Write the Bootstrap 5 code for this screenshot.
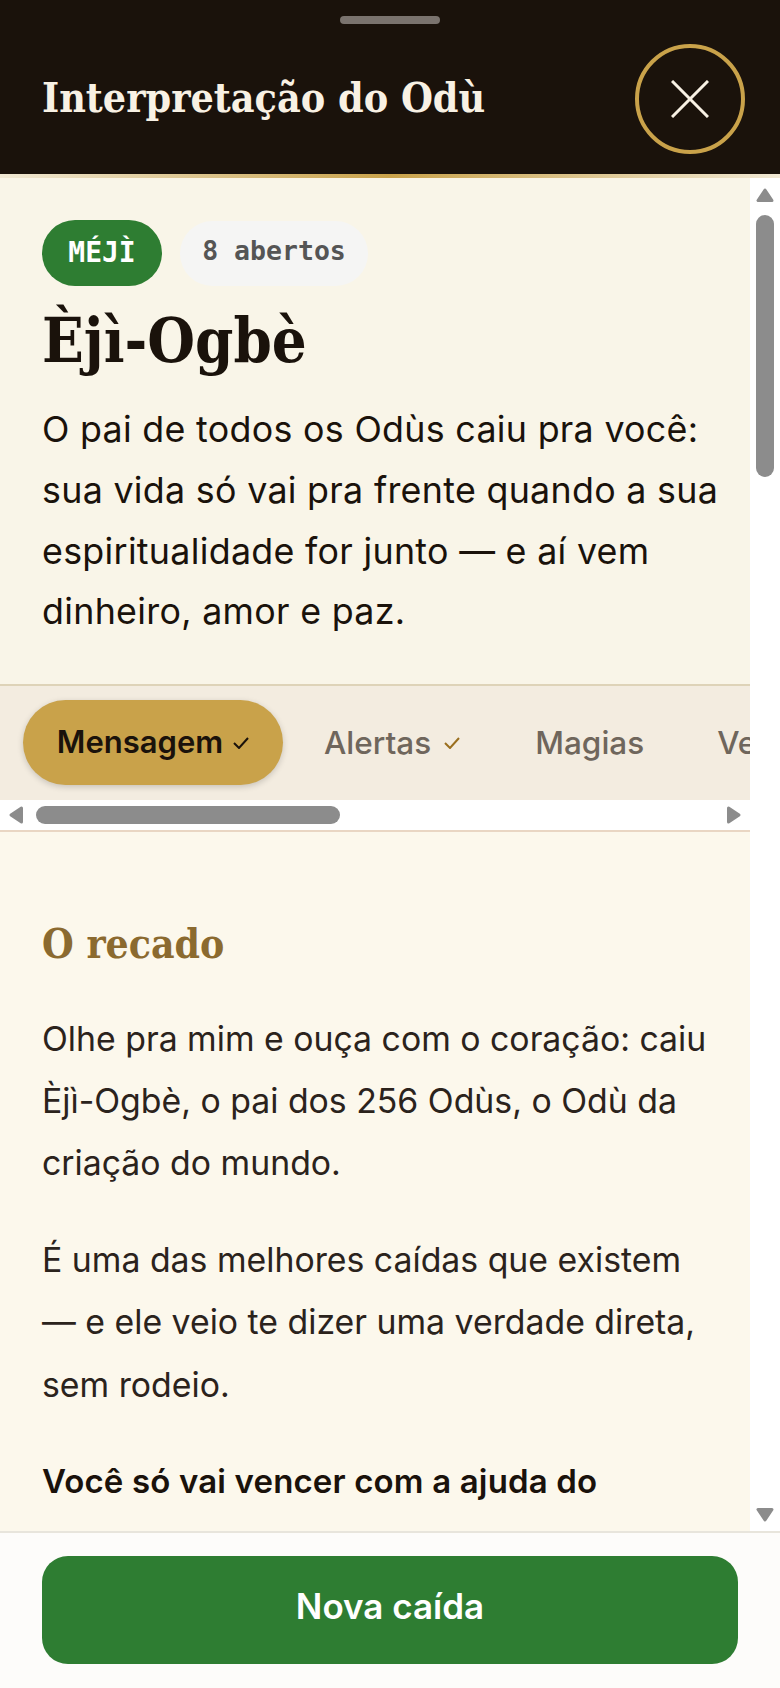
<!DOCTYPE html>
<html lang="pt-BR">
<head>
<meta charset="utf-8">
<title>Interpretação do Odù</title>
<link href="https://cdn.jsdelivr.net/npm/bootstrap@5.3.0/dist/css/bootstrap.min.css" rel="stylesheet">
<style>
html,body{height:100%;margin:0;overflow:hidden}
body{background:#fdfcfa;font-family:"Inter","Noto Sans",sans-serif;color:#1a120b}
.sheet{height:1688px;width:780px}
.sheet-head{height:174px;background:#1a120b;flex:none;padding:44px 35px 0 42px}
.grab{width:100px;height:8px;border-radius:4px;background:#7a736e;top:16px;left:340px}
.sheet-title{font-family:"DejaVu Serif Condensed","DejaVu Serif",serif;font-weight:700;font-size:40.8px;line-height:1;color:#f8f1e4;margin:34px 0 0}
.close-ring{width:110px;height:110px;border:4px solid #c9a24a;border-radius:50%;background:transparent}
.gold-rule{height:4px;flex:none;background:linear-gradient(90deg,#f0e8d4,#c9a24a 50%,#f0e8d4)}
.pane{min-height:0;overflow:hidden}
.vbar{width:30px;flex:none;background:#fff;padding:10px 6px 9px}
.thumb-v{width:18px;height:262px;background:#8c8c8c;border-radius:9px;margin-top:13px}
.arrow{fill:#8c8c8c;stroke:#8c8c8c;stroke-width:3;stroke-linejoin:round}
.hero{background:#f9f5e8;padding:42px 20px 0 42px;height:508px;flex:none;border-bottom:2px solid #ded3b8}
.pill-odu{background:#2e7d32;color:#fff;font-family:"DejaVu Sans Mono",monospace;font-weight:700;font-size:28px;width:120px;height:66px;border-radius:33px}
.pill-open{background:#f5f5f4;color:#555;font-family:"DejaVu Sans Mono",monospace;font-weight:700;font-size:26.5px;width:188px;height:65px;border-radius:33px;padding-bottom:4px;margin-left:2px}
.odu-name{font-family:"DejaVu Serif Condensed","DejaVu Serif",serif;font-weight:700;font-size:61px;line-height:1;margin:24px 0 0}
.odu-lead{font-size:35.8px;letter-spacing:.3px;line-height:60.8px;margin:28px 0 0;color:#1a120b}
.tabs{background:#f3ece0;height:114px;flex:none;padding:14px 0 0 23px;overflow:hidden}
.tab-on{background:#c9a24a;color:#1a120b;font-weight:600;width:260px;height:85px;border-radius:43px;box-shadow:0 2px 6px rgba(0,0,0,.18);flex:none;gap:10px}
.tab-on .tab-txt{font-size:31px}
.tab-off{color:#6f665c;font-weight:500;flex:none;height:85px}
.tab-txt{font-size:31.5px;white-space:nowrap}
.tab-a{margin-left:41px;gap:13px}
.tab-b{margin-left:75px}
.tab-c{margin-left:73px}
.hbar{height:30px;background:#fff;flex:none;padding:6px 9px}
.thumb-h{width:304px;height:18px;background:#8c8c8c;border-radius:9px;margin-left:13px}
.peach{height:2px;background:#e9d6c3;flex:none}
.reading{background:#fcf8ec;padding:0 30px 0 42px;overflow:hidden}
.reading h3{font-family:"DejaVu Serif Condensed","DejaVu Serif",serif;font-weight:700;font-size:40.5px;color:#8b6a2f;line-height:1;margin:92px 0 0}
.reading p{font-size:33.8px;line-height:62.4px;margin:0 0 34px;color:#2b231c}
.reading h3+p{margin-top:43px}
.reading p.strong{color:#1a120b;font-weight:600;font-size:33px;letter-spacing:.15px}
.sheet-foot{height:157px;flex:none;border-top:2px solid #e8e5dc;background:#fdfcfa;padding:23px 42px}
.go{background:#2e7d32;color:#fff;border-radius:26px;height:108px;font-size:35px;font-weight:600;width:100%;border:0;padding-bottom:8px}
</style>
</head>
<body>
<div class="sheet d-flex flex-column position-relative">
  <header class="sheet-head d-flex align-items-start justify-content-between position-relative">
    <span class="grab position-absolute"></span>
    <h1 class="sheet-title">Interpretação do Odù</h1>
    <button class="close-ring d-flex align-items-center justify-content-center p-0" aria-label="Fechar">
      <svg width="38" height="38" viewBox="0 0 38 38"><path d="M1 1 37 37M37 1 1 37" stroke="#f8f1e4" stroke-width="3" fill="none"/></svg>
    </button>
  </header>
  <div class="gold-rule"></div>
  <div class="pane flex-grow-1 d-flex">
    <div class="flex-grow-1 d-flex flex-column" style="min-width:0">
      <section class="hero">
        <div class="d-flex gap-3 align-items-center">
          <span class="pill-odu d-flex align-items-center justify-content-center">MÉJÌ</span>
          <span class="pill-open d-flex align-items-center justify-content-center">8 abertos</span>
        </div>
        <h2 class="odu-name">Èjì-Ogbè</h2>
        <p class="odu-lead">O pai de todos os Odùs caiu pra você: sua vida só vai pra frente quando a sua espiritualidade for junto — e aí vem dinheiro, amor e paz.</p>
      </section>
      <nav class="tabs d-flex align-items-start">
        <div class="tab-on d-flex align-items-center justify-content-center"><span class="tab-txt">Mensagem</span>
          <svg width="16" height="12" viewBox="0 0 16 12"><path d="M1 6 6 11 15 1" stroke="#1a120b" stroke-width="2" fill="none"/></svg></div>
        <div class="tab-off tab-a d-flex align-items-center"><span class="tab-txt">Alertas</span>
          <svg width="16" height="12" viewBox="0 0 16 12"><path d="M1 6 6 11 15 1" stroke="#9a6f1f" stroke-width="2" fill="none"/></svg></div>
        <div class="tab-off tab-b d-flex align-items-center"><span class="tab-txt">Magias</span></div>
        <div class="tab-off tab-c d-flex align-items-center"><span class="tab-txt">Ve</span></div>
      </nav>
      <div class="hbar d-flex align-items-center">
        <svg width="14" height="18" viewBox="0 0 14 18"><path class="arrow" d="M12.5 2V16L2 9Z"/></svg>
        <div class="thumb-h"></div>
        <svg class="ms-auto" width="14" height="18" viewBox="0 0 14 18"><path class="arrow" d="M1.5 2V16L12 9Z"/></svg>
      </div>
      <div class="peach"></div>
      <article class="reading flex-grow-1">
        <h3>O recado</h3>
        <p>Olhe pra mim e ouça com o coração: caiu Èjì-Ogbè, o pai dos 256 Odùs, o Odù da criação do mundo.</p>
        <p>É uma das melhores caídas que existem — e ele veio te dizer uma verdade direta, sem rodeio.</p>
        <p class="strong">Você só vai vencer com a ajuda do</p>
      </article>
    </div>
    <div class="vbar d-flex flex-column align-items-center">
      <svg width="18" height="14" viewBox="0 0 18 14"><path class="arrow" d="M2 12.5H16L9 2Z"/></svg>
      <div class="thumb-v"></div>
      <svg class="mt-auto" width="18" height="14" viewBox="0 0 18 14"><path class="arrow" d="M2 1.5H16L9 12Z"/></svg>
    </div>
  </div>
  <footer class="sheet-foot">
    <button class="go d-block">Nova caída</button>
  </footer>
</div>
</body>
</html>
